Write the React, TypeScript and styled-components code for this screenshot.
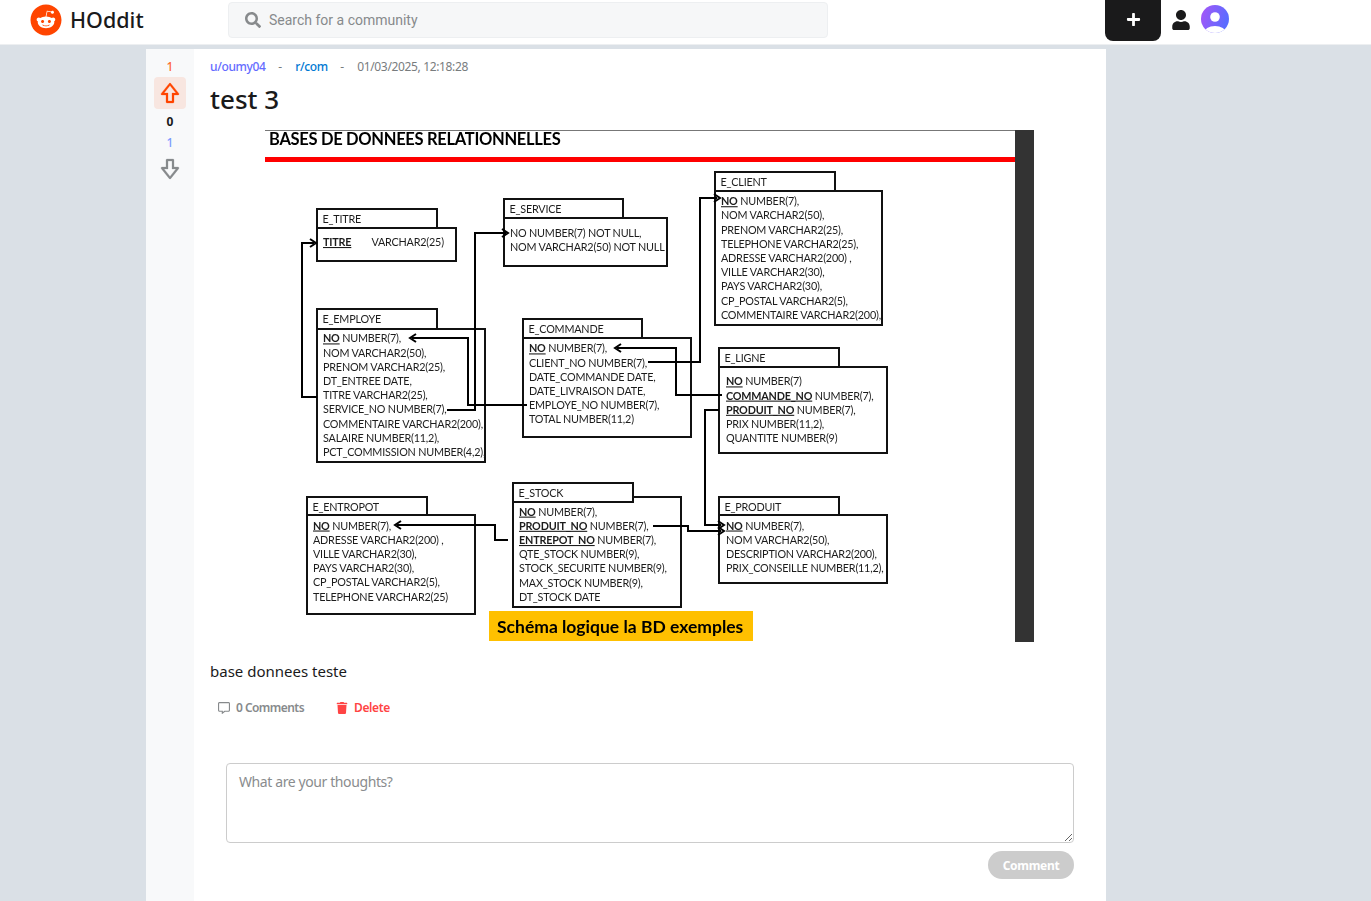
import React from "react";
import styled, { createGlobalStyle } from "styled-components";
import { FaReddit, FaSearch, FaPlus, FaUser, FaRegCommentAlt, FaTrash } from "react-icons/fa";
import { BiUpvote, BiDownvote } from "react-icons/bi";

const Global = createGlobalStyle`
  html, body { margin: 0; padding: 0; height: 100%; overflow: hidden; background: #dae0e6; }
  body { font-family: "Noto Sans", "Liberation Sans", sans-serif; color: #1a1a1b; }
  * { box-sizing: border-box; }
`;

const Page = styled.div`
  height: 901px;
  display: flex;
  flex-direction: column;
  overflow: hidden;
`;

const TopBar = styled.header`
  height: 45px;
  flex: none;
  background: #fff;
  border-bottom: 1px solid #edeff1;
  display: flex;
  align-items: flex-start;
`;

const Brand = styled.div`
  width: 228px;
  flex: none;
  padding: 4px 0 0 30px;
  display: flex;
  align-items: center;
  gap: 8px;
  svg { color: #ff4500; display: block; }
`;

const BrandName = styled.span`
  font-size: 21.5px;
  line-height: 32px;
  font-weight: 500;
  color: #1a1a1b;
`;

const SearchBox = styled.div`
  width: 600px;
  height: 36px;
  margin-top: 2px;
  flex: none;
  display: flex;
  align-items: center;
  gap: 8px;
  padding: 0 16px;
  background: #f6f7f8;
  border: 1px solid #edeff1;
  border-radius: 4px;
  color: #878a8c;
  font-family: "Roboto", "Liberation Sans", sans-serif;
  font-size: 14px;
`;

const Actions = styled.div`
  margin-left: 277px;
  display: flex;
  align-items: center;
`;

const CreateButton = styled.button`
  width: 56px;
  height: 41px;
  border: 0;
  padding: 0 0 3px;
  background: #1a1a1b;
  color: #fff;
  border-radius: 0 0 8px 8px;
  display: flex;
  align-items: center;
  justify-content: center;
  margin-right: 11px;
`;

const UserGlyph = styled.span`
  display: flex;
  justify-content: center;
  width: 18px;
  overflow: visible;
  color: #1a1a1b;
  margin-right: 11px;
  margin-top: -1px;
`;

const Avatar = styled.svg`
  display: block;
  margin-top: -4px;
`;

const Card = styled.main`
  width: 960px;
  margin: 4px 0 0 146px;
  flex: 1;
  background: #fff;
  display: flex;
`;

const VoteRail = styled.aside`
  width: 48px;
  flex: none;
  background: #f8f9fa;
  padding-top: 8px;
  display: flex;
  flex-direction: column;
  align-items: center;
`;

const VoteCount = styled.span<{ $color: string; $bold?: boolean }>`
  font-size: 12px;
  line-height: 20px;
  color: ${(p) => p.$color};
  font-weight: ${(p) => (p.$bold ? 700 : 500)};
  margin-bottom: ${(p) => (p.$bold ? "1px" : "0")};
`;

const VoteButton = styled.div<{ $active?: boolean }>`
  width: 32px;
  height: 32px;
  margin: ${(p) => (p.$active ? "0 0 3px" : "0")};
  display: flex;
  align-items: center;
  justify-content: center;
  border-radius: 4px;
  background: ${(p) => (p.$active ? "#ff45001a" : "transparent")};
  color: ${(p) => (p.$active ? "#ff4500" : "#878a8c")};
  svg { stroke: currentColor; stroke-width: 0.25; }
`;

const Content = styled.article`
  flex: 1;
  padding: 8px 16px 0;
  min-width: 0;
`;

const Meta = styled.div`
  display: flex;
  align-items: center;
  font-size: 12px;
  line-height: 20px;
  letter-spacing: -0.35px;
  color: #787c7e;
`;

const MetaAuthor = styled.span`
  color: #646cff;
  font-weight: 500;
`;

const MetaCommunity = styled.span`
  color: #0079d3;
  font-weight: 500;
`;

const MetaDash = styled.span`
  margin: 0 13.5px 0 12.5px;
`;

const Title = styled.h1`
  margin: 6px 0 0;
  font-size: 26px;
  line-height: 32px;
  font-weight: 500;
  color: #1a1a1b;
`;

const Figure = styled.div`
  margin-top: 15px;
  padding-right: 1px;
  display: flex;
  justify-content: center;
`;

const Schema = styled.svg`
  display: block;
  filter: blur(0.3px);
  text {
    font-family: "Lato", "Liberation Sans", sans-serif;
    font-size: 10.8px;
    letter-spacing: -0.2px;
    fill: #1c1c1c;
  }
  text.heading { font-size: 16.5px; letter-spacing: -0.3px; font-weight: 700; fill: #000; }
  text.caption { font-size: 17.5px; letter-spacing: 0; font-weight: 700; fill: #000; }
`;

const Body = styled.p`
  margin: 19px 0 0;
  font-size: 15px;
  line-height: 20px;
  color: #1a1a1b;
`;

const PostActions = styled.div`
  margin-top: 17px;
  display: flex;
  padding-left: 8px;
  gap: 32px;
`;

const PostAction = styled.button<{ $danger?: boolean }>`
  border: 0;
  background: none;
  padding: 0;
  display: flex;
  align-items: center;
  gap: 6px;
  font-family: inherit;
  font-size: 12px;
  line-height: 20px;
  letter-spacing: ${(p) => (p.$danger ? "-0.4px" : "-0.55px")};
  font-weight: 600;
  color: ${(p) => (p.$danger ? "#ff4444" : "#878a8c")};
`;

const CommentForm = styled.form`
  margin: 45px 16px 0;
  display: flex;
  flex-direction: column;
  align-items: flex-end;
`;

const CommentInput = styled.textarea`
  display: block;
  width: 848px;
  height: 80px;
  padding: 7px 12px;
  border: 1px solid #ccc;
  border-radius: 4px;
  font-family: inherit;
  font-size: 14px;
  line-height: 21px;
  letter-spacing: -0.4px;
  outline: none;
  &::placeholder { color: #8a8c8e; opacity: 1; }
`;

const SubmitButton = styled.button`
  margin-top: 8px;
  width: 86px;
  height: 28px;
  border: 0;
  border-radius: 14px;
  background: #ccc;
  color: #fff;
  font-family: inherit;
  font-size: 12px;
  letter-spacing: -0.3px;
  font-weight: 700;
`;

type Line = { t: string; key?: string };
type Table = {
  name: string;
  head: [number, number, number];
  body: [number, number, number, number];
  textX: number;
  firstY: number;
  lines: Line[];
};

const tables: Table[] = [
  { name: "E_TITRE", head: [317, 209, 437], body: [317, 228, 456, 261], textX: 323, firstY: 246, lines: [{ key: "TITRE", t: "        VARCHAR2(25)" }] },
  { name: "E_SERVICE", head: [504, 199, 623], body: [504, 218, 667, 266], textX: 510, firstY: 236.5, lines: [{ t: "NO NUMBER(7) NOT NULL," }, { t: "NOM VARCHAR2(50) NOT NULL" }] },
  {
    name: "E_EMPLOYE", head: [317, 309, 437], body: [317, 329, 485, 462], textX: 323, firstY: 342.4,
    lines: [{ key: "NO", t: " NUMBER(7)," }, { t: "NOM VARCHAR2(50)," }, { t: "PRENOM VARCHAR2(25)," }, { t: "DT_ENTREE DATE," }, { t: "TITRE VARCHAR2(25)," }, { t: "SERVICE_NO NUMBER(7)," }, { t: "COMMENTAIRE VARCHAR2(200)," }, { t: "SALAIRE NUMBER(11,2)," }, { t: "PCT_COMMISSION NUMBER(4,2)," }],
  },
  {
    name: "E_COMMANDE", head: [523, 319, 642], body: [523, 338, 691, 437], textX: 529, firstY: 352.4,
    lines: [{ key: "NO", t: " NUMBER(7)," }, { t: "CLIENT_NO NUMBER(7)," }, { t: "DATE_COMMANDE DATE," }, { t: "DATE_LIVRAISON DATE," }, { t: "EMPLOYE_NO NUMBER(7)," }, { t: "TOTAL NUMBER(11,2)" }],
  },
  {
    name: "E_CLIENT", head: [715, 172, 835], body: [715, 191, 882, 325], textX: 721, firstY: 205.2,
    lines: [{ key: "NO", t: " NUMBER(7)," }, { t: "NOM VARCHAR2(50)," }, { t: "PRENOM VARCHAR2(25)," }, { t: "TELEPHONE VARCHAR2(25)," }, { t: "ADRESSE VARCHAR2(200) ," }, { t: "VILLE VARCHAR2(30)," }, { t: "PAYS VARCHAR2(30)," }, { t: "CP_POSTAL VARCHAR2(5)," }, { t: "COMMENTAIRE VARCHAR2(200)," }],
  },
  {
    name: "E_LIGNE", head: [719, 348, 839], body: [719, 367, 887, 453], textX: 726, firstY: 385.4,
    lines: [{ key: "NO", t: " NUMBER(7)" }, { key: "COMMANDE_NO", t: " NUMBER(7)," }, { key: "PRODUIT_NO", t: " NUMBER(7)," }, { t: "PRIX NUMBER(11,2)," }, { t: "QUANTITE NUMBER(9)" }],
  },
  {
    name: "E_ENTROPOT", head: [307, 497, 427], body: [307, 515, 475, 614], textX: 313, firstY: 529.5,
    lines: [{ key: "NO", t: " NUMBER(7)," }, { t: "ADRESSE VARCHAR2(200) ," }, { t: "VILLE VARCHAR2(30)," }, { t: "PAYS VARCHAR2(30)," }, { t: "CP_POSTAL VARCHAR2(5)," }, { t: "TELEPHONE VARCHAR2(25)" }],
  },
  {
    name: "E_STOCK", head: [513, 483, 633], body: [513, 497, 681, 607], textX: 519, firstY: 515.6,
    lines: [{ key: "NO", t: " NUMBER(7)," }, { key: "PRODUIT_NO", t: " NUMBER(7)," }, { key: "ENTREPOT_NO", t: " NUMBER(7)," }, { t: "QTE_STOCK NUMBER(9)," }, { t: "STOCK_SECURITE NUMBER(9)," }, { t: "MAX_STOCK NUMBER(9)," }, { t: "DT_STOCK DATE" }],
  },
  {
    name: "E_PRODUIT", head: [719, 497, 839], body: [719, 515, 887, 583], textX: 726, firstY: 529.5,
    lines: [{ key: "NO", t: " NUMBER(7)," }, { t: "NOM VARCHAR2(50)," }, { t: "DESCRIPTION VARCHAR2(200)," }, { t: "PRIX_CONSEILLE NUMBER(11,2)," }],
  },
];

const links: { d: string; tip: [number, number, number] }[] = [
  { d: "M317 397H302V243H314", tip: [316, 243, 1] },
  { d: "M447 410H475V233H506", tip: [508, 233, 1] },
  { d: "M527 405H468V338H412", tip: [410, 338, -1] },
  { d: "M648 362H700V198H717", tip: [720, 198, 1] },
  { d: "M722 395H676V348H617", tip: [615, 348, -1] },
  { d: "M719 410H705V525H721", tip: [724, 525, 1] },
  { d: "M653 526H688V531H721", tip: [724, 531, 1] },
  { d: "M508 540H495V525H397", tip: [395, 525, -1] },
];

const TableDrawing = ({ table }: { table: Table }) => {
  const [hx, hy, hr] = table.head;
  const [bx, by, br, bb] = table.body;
  return (
    <g>
      <rect x={bx} y={by} width={br - bx} height={bb - by} fill="#fff" stroke="#111" strokeWidth={2} />
      <rect x={hx} y={hy} width={hr - hx} height={(table.name === "E_STOCK" ? 502 : by) - hy} fill="#fff" stroke="#111" strokeWidth={2} />
      <text x={hx + 5.5} y={hy + 13.5}>{table.name}</text>
      {table.lines.map((l, i) => (
        <text key={i} x={table.textX} y={table.firstY + i * 14.2} xmlSpace="preserve">
          {l.key && <tspan fontWeight={700} textDecoration="underline">{l.key}</tspan>}
          {l.t}
        </text>
      ))}
    </g>
  );
};

const SchemaDrawing = () => (
  <Schema width={769} height={512} viewBox="265 130 769 512">
    <rect x={265} y={130} width={769} height={512} fill="#fff" />
    <rect x={265} y={130} width={750} height={1} fill="#777" />
    <text className="heading" x={269} y={145}>BASES DE DONNEES RELATIONNELLES</text>
    <rect x={265} y={157} width={750} height={5} fill="#ff0000" />
    <rect x={1015} y={130} width={19} height={512} fill="#333" />
    {tables.map((t) => <TableDrawing key={t.name} table={t} />)}
    {links.map((l, i) => (
      <g key={i} fill="none" stroke="#000" strokeWidth={2}>
        <path d={l.d} />
        <path d={`M${l.tip[0] - 6 * l.tip[2]} ${l.tip[1] - 4}L${l.tip[0]} ${l.tip[1]}L${l.tip[0] - 6 * l.tip[2]} ${l.tip[1] + 4}`} />
      </g>
    ))}
    <rect x={489} y={611} width={264} height={30} fill="#ffc000" />
    <text className="caption" x={497} y={633}>Schéma logique la BD exemples</text>
  </Schema>
);

export default function App() {
  return (
    <Page>
      <Global />
      <TopBar>
        <Brand>
          <FaReddit size={32} />
          <BrandName>HOddit</BrandName>
        </Brand>
        <SearchBox>
          <FaSearch size={16} />
          <span>Search for a community</span>
        </SearchBox>
        <Actions>
          <CreateButton aria-label="Create"><FaPlus size={15} /></CreateButton>
          <UserGlyph><FaUser size={20} /></UserGlyph>
          <Avatar width={28} height={28} viewBox="0 0 28 28">
            <defs>
              <linearGradient id="avatarGrad" x1="0" y1="0" x2="1" y2="0.3">
                <stop offset="0" stopColor="#a855f7" />
                <stop offset="1" stopColor="#5b6cff" />
              </linearGradient>
              <clipPath id="avatarClip"><circle cx="14" cy="14" r="14" /></clipPath>
            </defs>
            <circle cx="14" cy="14" r="14" fill="url(#avatarGrad)" />
            <g clipPath="url(#avatarClip)" fill="#fff">
              <circle cx="14" cy="12" r="4.8" />
              <ellipse cx="14" cy="28" rx="11" ry="7" />
            </g>
          </Avatar>
        </Actions>
      </TopBar>
      <Card>
        <VoteRail>
          <VoteCount $color="#ff6b35">1</VoteCount>
          <VoteButton $active><BiUpvote size={24} /></VoteButton>
          <VoteCount $color="#1a1a1b" $bold>0</VoteCount>
          <VoteCount $color="#7d9cff">1</VoteCount>
          <VoteButton><BiDownvote size={24} /></VoteButton>
        </VoteRail>
        <Content>
          <Meta>
            <MetaAuthor>u/oumy04</MetaAuthor>
            <MetaDash>-</MetaDash>
            <MetaCommunity>r/com</MetaCommunity>
            <MetaDash>-</MetaDash>
            <span>01/03/2025, 12:18:28</span>
          </Meta>
          <Title>test 3</Title>
          <Figure><SchemaDrawing /></Figure>
          <Body>base donnees teste</Body>
          <PostActions>
            <PostAction type="button"><FaRegCommentAlt size={12} />0 Comments</PostAction>
            <PostAction type="button" $danger><FaTrash size={12} />Delete</PostAction>
          </PostActions>
          <CommentForm>
            <CommentInput placeholder="What are your thoughts?" />
            <SubmitButton type="button">Comment</SubmitButton>
          </CommentForm>
        </Content>
      </Card>
    </Page>
  );
}
